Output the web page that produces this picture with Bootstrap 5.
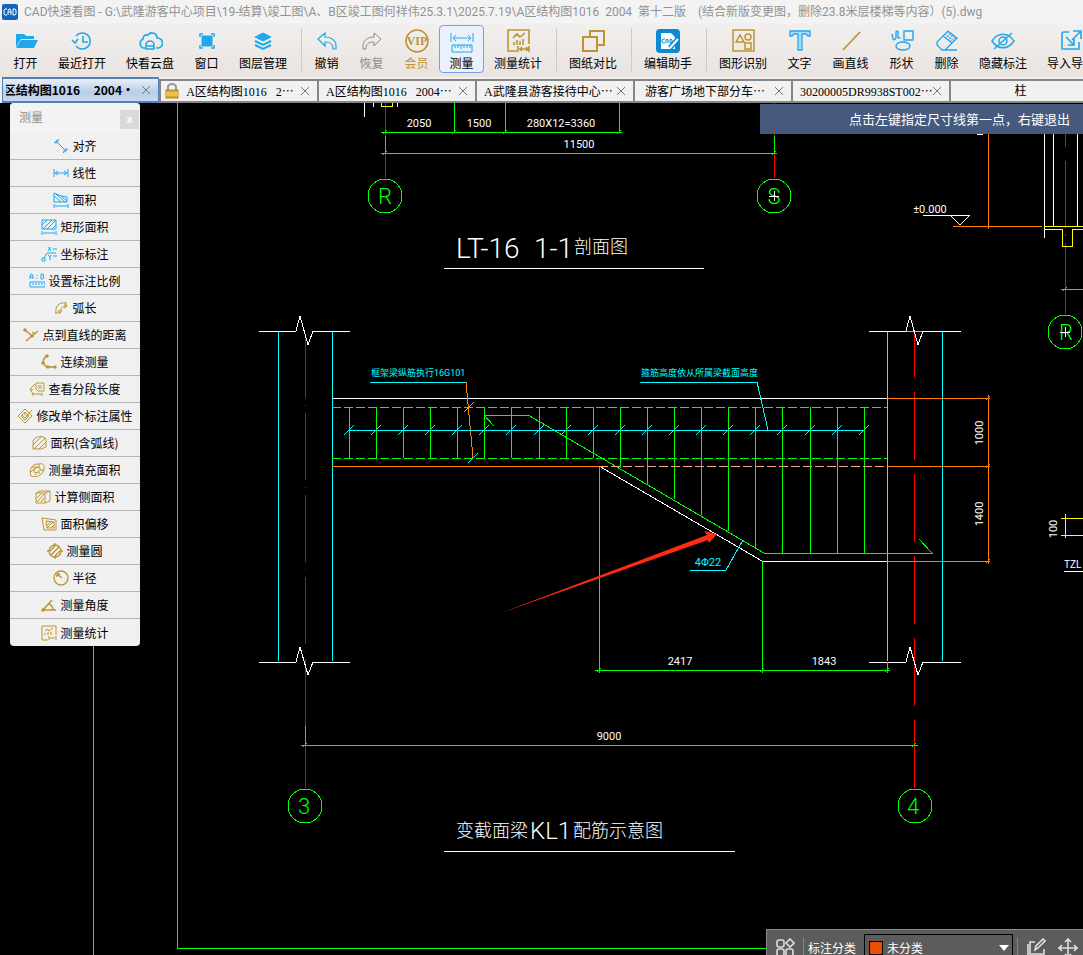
<!DOCTYPE html>
<html lang="zh-CN">
<head>
<meta charset="utf-8">
<meta name="viewport" content="width=device-width, initial-scale=1">
<title>CAD快速看图</title>
<link href="https://cdn.jsdelivr.net/npm/bootstrap@5.3.0/dist/css/bootstrap.min.css" rel="stylesheet">
<style>
  :root { --gold: #bd9434; --sky: #1fa8ec; }
  body { font: 12px/16px "Noto Sans CJK SC", sans-serif; color: #000; background: #000; }
  .app-title { height: 23px; background: #f3f3f3; color: #929292; font-family: Roboto, "Noto Sans CJK SC", sans-serif; white-space: pre; padding-left: 2px; gap: 6px; }
  .ribbon { background: linear-gradient(#f1f0ee, #eae3e0); padding: 2px 0 4px 3px; }
  .tool { flex: none; width: 45px; height: 48px; padding: 2px 0 0; border: 1px solid transparent; border-radius: 4px; background: none; color: #000; white-space: nowrap; display: flex; flex-direction: column; align-items: center; gap: 1px; }
  .tool.w3 { width: 57px; }
  .tool.w4 { width: 68px; }
  .tool.picked { background: #e9f1fd; border-color: #6fa0ee; }
  .tool svg { width: 26px; height: 26px; flex: none; }
  .tool:disabled { color: #8a8a8a; }
  .rule { flex: none; width: 1px; margin: 3px 2px 1px 4px; background: #cfcac8; }
  svg { fill: none; stroke: currentColor; }
  .sky { color: var(--sky); }
  .gold { color: var(--gold); }
  .doc-tabs { height: 26px; background: #f0f0f0; padding-left: 2px; }
  .doc { flex: none; width: 158px; height: 24px; border: 0 solid #868686; border-width: 2px 0 2px 2px; background: #f1f1f1; color: #000; padding: 0 8px 0 7px; font-family: "Liberation Serif", "Noto Sans CJK SC", sans-serif; white-space: pre; text-decoration: none; }
  .doc i { font-style: normal; font-family: "Noto Sans CJK SC", sans-serif; }
  .doc svg { width: 8px; height: 8px; flex: none; color: #777; }
  .doc.current { width: 157px; height: 26px; border: 1px solid #5580b5; border-width: 2px 1px; background: linear-gradient(#e8effa, #b9cde8 60%, #c8d9f0); font: 700 12px/16px "Noto Sans CJK SC", sans-serif; padding-left: 3px; }
  .doc.last { width: 142px; }
  .doc .lock { width: 14px; height: 16px; }
  .sheet { min-height: 0; }
  .sheet > svg { shape-rendering: crispEdges; }
  .sheet text { stroke: none; font-family: Roboto, "Noto Sans CJK SC", sans-serif; font-size: 11px; text-anchor: middle; }
  .sheet .headline { font-weight: 300; font-size: 28px; text-anchor: start; fill: #fff; }
  .sheet .headline .han { font-size: 18px; }
  .sheet .headline .mid { font-size: 24px; }
  .sheet .note { font-size: 9px; text-anchor: start; fill: #0ff; }
  .sheet .axis { font-weight: 300; font-size: 22px; fill: #0f0; }
  .sheet .tag { font-size: 10px; text-anchor: start; fill: #fff; }
  .g { stroke: #0f0; } .c { stroke: #0ff; } .w { stroke: #fff; } .o { stroke: #ff8000; } .r { stroke: #f00; } .y { stroke: #ff0; }
  .tip { top: 1px; right: 0; width: 323px; height: 30px; padding-right: 13px; background: #475a7d; color: #fff; font-size: 13px; }
  .palette { top: 0; left: 10px; width: 130px; border-radius: 4px; background: #f0f0f0; }
  .palette header { height: 30px; padding: 0 1px 2px 9px; background: #f3f3f3; color: #8d8d8d; }
  .palette header button { width: 19px; height: 19px; border: 0; background: #d9d9d9; color: #fff; font: 700 11px/16px "Liberation Sans", sans-serif; padding: 0; margin-top: 4px; }
  .pick { height: 27px; border: 0; border-bottom: 1px solid #b4b4b4; background: none; padding: 0; color: #000; gap: 3px; white-space: nowrap; }
  .pick:last-child { border-bottom: 0; }
  .pick svg { width: 16px; height: 16px; flex: none; }
  .marks { right: 0; bottom: -10px; width: 317px; height: 36px; background: #5c5c5c; border: 1px solid #8a8a8a; border-width: 1px 0 0 1px; color: #fff; padding: 0 5px 0 8px; }
  .marks svg { width: 20px; height: 20px; flex: none; color: #ddd; }
  .marks .bar { width: 1px; height: 20px; background: #858585; }
  .marks select { width: 149px; height: 28px; appearance: none; border: 1px solid #000; border-radius: 0; background: #5c5c5c; color: #fff; padding: 0 0 0 22px; font-size: 12px; }
  .swatch { left: 5px; top: 7px; width: 14px; height: 14px; background: #e85000; border: 1px solid #000; }
  .marks .caret { right: 4px; top: 11px; width: 10px; height: 6px; color: #fff; pointer-events: none; }
</style>
<script src="https://cdn.jsdelivr.net/npm/bootstrap@5.3.0/dist/js/bootstrap.bundle.min.js"></script>
</head>
<body class="d-flex flex-column vh-100 overflow-hidden">

<header class="app-title d-flex align-items-center flex-shrink-0 overflow-hidden">
  <svg width="16" height="16" viewBox="0 0 16 16" class="flex-shrink-0"><rect width="16" height="16" rx="2" fill="#1464bd" stroke="none"/><path d="M5 5H3L2 6v4l1 1h2M6 11V7l1-2h1l1 2v4M6 8h3M11 5v6h2l1-1V6l-1-1z" stroke="#fff"/></svg>
  <span>CAD快速看图 - G:\武隆游客中心项目\19-结算\竣工图\A、B区竣工图何祥伟25.3.1\2025.7.19\A区结构图1016  2004  第十二版    (结合新版变更图，删除23.8米层楼梯等内容）(5).dwg</span>
</header>

<nav class="ribbon d-flex flex-shrink-0 overflow-hidden" aria-label="工具栏">
  <button class="tool"><svg class="sky" viewBox="0 0 26 26"><path d="M3 19V6h8l2 2h8v3H8z" fill="currentColor" stroke="none"/><path d="M8 12h17l-4 8H3z" fill="currentColor" stroke="none"/></svg>打开</button>
  <button class="tool w4"><svg class="sky" viewBox="0 0 26 26" stroke-width="1.6"><path d="M7 8a8 8 0 1 1 0 10M3 12l3 3 3-4M14 8v6h5"/></svg>最近打开</button>
  <button class="tool w4"><svg class="sky" viewBox="0 0 26 26" stroke-width="1.6"><path d="M8 20H6a5 5 0 0 1 0-9 4 4 0 0 1 5-4 5 5 0 0 1 9 3 5 5 0 0 1 1 10h-2M9 21v-4a4 4 0 0 1 8 0v4zM9 18h8"/></svg>快看云盘</button>
  <button class="tool"><svg class="sky" viewBox="0 0 26 26"><path d="M8 8h10v10H8z" fill="currentColor"/><path d="M6 9V6h3M17 6h3v3M20 17v3h-3M9 20H6v-3" stroke-width="1.5"/></svg>窗口</button>
  <button class="tool w4"><svg class="sky" viewBox="0 0 26 26"><path d="M13 5l8 4-8 4-8-4z" fill="currentColor"/><path d="M5 13l8 4 8-4M5 17l8 4 8-4" stroke-width="2"/></svg>图层管理</button>
  <span class="rule"></span>
  <button class="tool"><svg class="sky" viewBox="0 0 26 26" stroke-width="1.2"><path d="M4 11l7-6v4c7 0 11 4 11 9v3h-3c0-5-2-7-8-7v4z"/></svg>撤销</button>
  <button class="tool" disabled><svg viewBox="0 0 26 26" stroke-width="1"><path d="M22 11l-7-6v4C8 9 4 13 4 18v3h3c0-5 2-7 8-7v4z"/></svg>恢复</button>
  <button class="tool gold"><svg viewBox="0 0 26 26"><circle cx="13" cy="13" r="11" stroke-width="1.6"/><text x="13" y="17" text-anchor="middle" font-family="Liberation Serif, serif" font-weight="700" font-size="12" fill="currentColor" stroke="none">VIP</text></svg>会员</button>
  <button class="tool picked"><svg class="sky" viewBox="0 0 26 26"><path d="M2 5v9M24 5v9M4 10h18M7 7l-3 3 3 3M19 7l3 3-3 3M3 17h20v7H3zM6 17v3M9 17v3M12 17v4M15 17v3M18 17v3M21 17v3"/></svg>测量</button>
  <button class="tool w4"><svg class="gold" viewBox="0 0 26 26" stroke-width="1.6"><path d="M12 23H3V2h21v14M8 10l4-4 3 3 5-4M9 17v-3M12 17v-5M15 17v-4M18 17v-6M13 18v6M24 18v6M14 21h9M17 19l-2 2 2 2M21 19l2 2-2 2"/></svg>测量统计</button>
  <span class="rule"></span>
  <button class="tool w4"><svg class="gold" viewBox="0 0 26 26" stroke-width="2"><path d="M10 9V3h14v14h-7M3 9h14v14H3z"/></svg>图纸对比</button>
  <span class="rule"></span>
  <button class="tool w4"><svg viewBox="0 0 26 26"><rect x="1" y="1" width="24" height="24" rx="4" fill="#0b8ad4" stroke="none"/><path d="M6 5h10l4 4v12H6z" fill="#fff" stroke="none"/><path d="M10 11H8l-1 1v2l1 1h2M11 15v-3l1-1 1 1v3M15 11v4h1l1-1v-2l-1-1z" stroke="#0b8ad4"/><path d="M15 20l8-9" stroke="#0b8ad4" stroke-width="5"/><path d="M15 20l8-9" stroke="#fff" stroke-width="2"/></svg>编辑助手</button>
  <span class="rule"></span>
  <button class="tool w4"><svg class="gold" viewBox="0 0 26 26" stroke-width="1.5"><path d="M3 2h21v21H3zM6 14l4-7 4 7zM15 15h6v6h-6z"/><circle cx="18" cy="9" r="3"/></svg>图形识别</button>
  <button class="tool"><svg class="sky" viewBox="0 0 26 26" stroke-width="1.3"><path d="M3 3h20v5h-2l-2-2h-4v16h-4V6H7L5 8H3z" fill="#a5dcf8"/></svg>文字</button>
  <button class="tool w3"><svg class="gold" viewBox="0 0 26 26" stroke-width="1.8"><path d="M5 22L22 4"/></svg>画直线</button>
  <button class="tool"><svg class="sky" viewBox="0 0 26 26" stroke-width="1.4"><path d="M3 6l1 5c1 2 3 0 3-2V4c0-1 2-1 2 0v5c0 2 2 1 2 0M15 3h9v9h-9z"/><ellipse cx="14" cy="18" rx="7" ry="4"/></svg>形状</button>
  <button class="tool"><svg class="sky" viewBox="0 0 26 26" stroke-width="1.3"><path d="M3 14L14 3l9 7-12 12H8l-5-5zM9 8l9 7M11 22h12"/><path stroke-width=".7" d="M11 6l9 7M13 4l9 7M12 10l5-5M14 12l5-5M16 14l5-5"/></svg>删除</button>
  <button class="tool w4"><svg class="sky" viewBox="0 0 26 26" stroke-width="1.5"><path d="M2 13c6-9 16-9 22 0-6 9-16 9-22 0zM4 21L22 5"/><circle cx="13" cy="13" r="4"/></svg>隐藏标注</button>
  <button class="tool w4"><svg class="sky" viewBox="0 0 26 26" stroke-width="1.6"><path d="M11 4H6a2 2 0 0 0-2 2v15h17v-7M15 3h8v8M22 4l-8 8M8 9l8 8M16 11v6h-6"/></svg>导入导出</button>
</nav>

<nav class="doc-tabs d-flex align-items-end flex-shrink-0 overflow-hidden" aria-label="图纸">
  <a href="#" class="doc current d-flex align-items-center gap-2"><span class="flex-fill d-flex justify-content-end overflow-hidden">A区结构图1016     2004·</span><svg viewBox="0 0 8 8"><path d="M0 0l8 8M8 0L0 8"/></svg></a>
  <a href="#" class="doc d-flex align-items-center justify-content-between ps-1"><svg class="lock" viewBox="0 0 14 16"><path d="M3 8V4a4 3 0 0 1 8 0v4" stroke="#999" stroke-width="2"/><rect x="1" y="7" width="12" height="8" fill="#e0a92c" stroke="#b98518"/><path d="M1 10h12M1 12h12" stroke="#f6d77a"/></svg><span>A区结构图1016   2<i>…</i></span><svg viewBox="0 0 8 8"><path d="M0 0l8 8M8 0L0 8"/></svg></a>
  <a href="#" class="doc d-flex align-items-center justify-content-between"><span>A区结构图1016   2004<i>…</i></span><svg viewBox="0 0 8 8"><path d="M0 0l8 8M8 0L0 8"/></svg></a>
  <a href="#" class="doc d-flex align-items-center justify-content-between"><span>A武隆县游客接待中心<i>…</i></span><svg viewBox="0 0 8 8"><path d="M0 0l8 8M8 0L0 8"/></svg></a>
  <a href="#" class="doc d-flex align-items-center justify-content-between"><span> 游客广场地下部分车<i>…</i></span><svg viewBox="0 0 8 8"><path d="M0 0l8 8M8 0L0 8"/></svg></a>
  <a href="#" class="doc d-flex align-items-center justify-content-between"><span>30200005DR9938ST002<i>…</i></span><svg viewBox="0 0 8 8"><path d="M0 0l8 8M8 0L0 8"/></svg></a>
  <a href="#" class="doc last d-flex align-items-center justify-content-center"><span>柱</span></a>
</nav>

<main class="sheet position-relative flex-fill overflow-hidden">
  <svg class="w-100 h-100 d-block" viewBox="1 104 1083 852" preserveAspectRatio="xMinYMin slice" role="img" aria-label="图纸">
    <!-- sheet frame -->
    <path class="g" d="M178 103V949H1084M94 640V956"/>
    <!-- section 1-1 -->
    <path class="w" d="M365 103V118M374 103V108M398 103V108"/>
    <path class="r" d="M386 103V179M775 103V179"/>
    <path class="g" d="M382 133H623M455 103V134M506 103V134M620 103V134M382 154H778M386 137V153M775 137V153M384 135l4-4M453 135l4-4M504 135l4-4M618 135l4-4M384 156l4-4M773 156l4-4"/>
    <path class="y" d="M382 103V107H393V103"/>
    <g class="g"><circle cx="386" cy="197" r="17"/><circle cx="775" cy="197" r="17"/><circle cx="1066" cy="333" r="17"/><circle cx="306" cy="807" r="17"/><circle cx="916" cy="807" r="17"/></g>
    <text class="axis" x="386" y="205">R</text><text class="axis" x="775" y="205">S</text><text class="axis" x="1067" y="341">R</text>
    <text class="axis" x="305" y="815">3</text><text class="axis" x="914" y="815">4</text>
    <path class="w" d="M770 197h10M775 192v10M1061 333h10M1066 328v10"/>
    <g fill="#fff"><text x="420" y="128">2050</text><text x="480" y="128">1500</text><text x="562" y="128">280X12=3360</text><text x="580" y="149">11500</text></g>
    <text class="headline"><tspan x="457" y="259">LT-16</tspan><tspan x="535" y="259">1-1</tspan><tspan class="han" x="575" y="254">剖面图</tspan></text>
    <path class="w" d="M445 269H705"/>
    <!-- detail at the right edge -->
    <path class="o" d="M989 135V230M954 227H1043"/>
    <path class="w" d="M924 216H971L961 226L951 216M978 135H984M1045 134V239M1054 134V227M1078 134V227"/>
    <path class="r" d="M1066 134V148M1066 162V229M1066 235V237M1066 244V315"/>
    <path class="y" d="M1045 227H1084M1045 230H1063V247H1073V230H1084M1062 519H1084M1062 536H1084M1066 515V539"/>
    <path class="g" d="M1062 290H1084M1064 292l4-4"/>
    <text x="931" y="214" fill="#fff">±0.000</text>
    <text class="tag" x="1065" y="569">TZL</text><path class="w" d="M1065 572H1084"/>
    <!-- columns -->
    <path class="c" d="M279 332V662M333 332V662M888 332V662M943 332V662M906 332H923"/>
    <path stroke="#d00" d="M306 335V399M306 406V407M306 414V481M306 488V489M306 496V563M306 570V571M306 578V645M306 652V653M306 660V789"/>
    <path class="r" d="M915 332V378M915 393V461M915 475V543M915 557V625M915 639V707M915 721V789"/>
    <path class="w" d="M260 332H297L301 317L309 346L314 332H351M870 332H907L911 317L919 346L924 332H962M260 663H297L301 648L309 676L314 663H351M870 663H907L911 648L919 676L924 663H962"/>
    <!-- beam, stirrups and haunch bar -->
    <path class="w" d="M333 399H888M600 467L763 562H888"/>
    <path class="g" stroke-dasharray="9 3" d="M333 408H888M333 459H888"/>
    <path class="g" d="M350 408V459M377 408V459M404 408V459M431 408V459M458 408V459M485 408V459M512 408V459M540 408V459M567 408V459M594 408V459M621 408V469M648 408V485M675 408V500M702 408V516M729 408V532M756 408V548M783 408V554M811 408V554M838 408V554M865 408V554"/>
    <path class="g" d="M495 427L485 416H529L765 554H933L920 540"/>
    <path class="o" d="M333 467H600M467 383L474 459"/>
    <path stroke="#ffa080" stroke-dasharray="9 3" d="M600 467H888"/>
    <path class="c" d="M349 431H865M345 436l10-10M372 436l10-10M399 436l10-10M426 436l10-10M453 436l10-10M480 436l10-10M507 436l10-10M535 436l10-10M562 436l10-10M589 436l10-10M616 436l10-10M643 436l10-10M670 436l10-10M697 436l10-10M724 436l10-10M751 436l10-10M778 436l10-10M806 436l10-10M833 436l10-10M860 436l10-10M465 413l10-10M469 464l10-10M371 383H467M641 383H758L769 431M691 571H727L744 541"/>
    <text class="note" x="372" y="377">框架梁纵筋执行16G101</text>
    <text class="note" x="642" y="377">箍筋高度依从所属梁截面高度</text>
    <text x="709" y="567" fill="#0ff">4Φ22</text>
    <!-- dimensions -->
    <path class="o" d="M889 399H991M889 467H991M889 562H991M989 396V565M987 401l4-4M987 469l4-4M987 564l4-4"/>
    <path class="g" d="M600 468V674M763 563V674M888 663V674M596 671H891M598 673l4-4M761 673l4-4M886 673l4-4M302 746H919M306 727V745M304 748l4-4M913 748l4-4"/>
    <g fill="#fff"><text x="681" y="666">2417</text><text x="825" y="666">1843</text><text x="610" y="741">9000</text>
      <text transform="translate(984 434) rotate(-90)">1000</text><text transform="translate(984 515) rotate(-90)">1400</text><text transform="translate(1058 530) rotate(-90)">100</text></g>
    <path fill="#ff2a14" stroke="none" shape-rendering="auto" d="M499 615L708 536L705 532L718 535L710 544L709 541Z"/>
    <text class="headline"><tspan class="han" x="457" y="838">变截面梁</tspan><tspan class="mid" x="531" y="840">KL1</tspan><tspan class="han" x="574" y="838">配筋示意图</tspan></text>
    <path class="w" d="M445 852H736"/>
  </svg>

  <div class="tip position-absolute d-flex align-items-center justify-content-end" role="status">点击左键指定尺寸线第一点，右键退出</div>

  <section class="palette position-absolute d-flex flex-column overflow-hidden" aria-label="测量">
    <header class="d-flex justify-content-between align-items-center"><span>测量</span><button aria-label="关闭">x</button></header>
    <button class="pick d-flex align-items-center justify-content-center"><svg class="sky" viewBox="0 0 16 16"><path d="M1 5l5-4M10 15l5-4M3 3l10 10M3 6V3h3M13 10v3h-3"/></svg>对齐</button>
    <button class="pick d-flex align-items-center justify-content-center"><svg class="sky" viewBox="0 0 16 16"><path d="M1 4v8M15 4v8M2 8h12M5 6L2 8l3 2M11 6l3 2-3 2"/></svg>线性</button>
    <button class="pick d-flex align-items-center justify-content-center"><svg class="sky" viewBox="0 0 16 16"><path d="M1 1l7 3 6 1v5H1zM1 4l7 6M3 2l9 8M8 4l6 5M1 12v4M15 12v4M2 14h12"/></svg>面积</button>
    <button class="pick d-flex align-items-center justify-content-center"><svg class="sky" viewBox="0 0 16 16"><path d="M1 1h14v9H1zM1 6l5-5M2 10l9-9M6 10l9-9M11 10l4-4M1 12v4M15 12v4M2 14h12"/></svg>矩形面积</button>
    <button class="pick d-flex align-items-center justify-content-center"><svg class="sky" viewBox="0 0 16 16"><path d="M1 12h3v3H1zM3 12l3-5h9M7 1l3 4M10 1L7 5M12 3h4M7 9l2 2 1-2M9 11v3M12 10h4"/></svg>坐标标注</button>
    <button class="pick d-flex align-items-center justify-content-center"><svg class="sky" viewBox="0 0 16 16"><path d="M1 6V3l1-2h1l1 2v3M1 4h3M8 2v1M8 5v1M12 1v5h2l1-1-1-2 1-1-1-1zM1 9h15v5H1zM4 10v2M7 10v2M10 10v2M13 10v2"/></svg>设置标注比例</button>
    <button class="pick d-flex align-items-center justify-content-center"><svg class="gold" viewBox="0 0 16 16"><path d="M3 13C2 6 6 2 13 3M7 13c0-4 2-7 7-7M2 13h5M13 2v4M5 10l2 3 2-3M11 4l3 2-3 2"/></svg>弧长</button>
    <button class="pick d-flex align-items-center justify-content-center"><svg class="gold" viewBox="0 0 16 16" stroke-width="1.5"><path d="M2 3l7 6M3 14L15 4M9 5l3 2"/><circle cx="2" cy="3" r="1"/><circle cx="9" cy="9" r="1"/></svg>点到直线的距离</button>
    <button class="pick d-flex align-items-center justify-content-center"><svg class="gold" viewBox="0 0 16 16" stroke-width="1.5"><path d="M6 2C1 5 1 10 6 13h8"/><g fill="currentColor"><circle cx="6" cy="2" r="1"/><circle cx="2" cy="9" r="1"/><circle cx="7" cy="13" r="1"/><circle cx="14" cy="13" r="1"/></g></svg>连续测量</button>
    <button class="pick d-flex align-items-center justify-content-center"><svg class="gold" viewBox="0 0 16 16"><path d="M7 2h8v8H9L7 8zM9 5h4M9 7h4M6 3L1 8l3 5h9M3 6l-2 2 3 1M4 12v3M13 12v3"/></svg>查看分段长度</button>
    <button class="pick d-flex align-items-center justify-content-center"><svg class="gold" viewBox="0 0 16 16"><path d="M1 8l7-7 7 7-7 7zM4 8l4-4 4 4-4 4zM5 7l3 3 7-8M7 5l3 4"/></svg>修改单个标注属性</button>
    <button class="pick d-flex align-items-center justify-content-center"><svg class="gold" viewBox="0 0 16 16"><path d="M2 14V6c2-5 10-6 13-2v8l-5 2zM2 10l8-8M3 14L14 3M8 14l7-7"/></svg>面积(含弧线)</button>
    <button class="pick d-flex align-items-center justify-content-center"><svg class="gold" viewBox="0 0 16 16"><path d="M2 14C0 9 2 2 9 2c5-1 7 1 6 5-1 6-7 9-13 7zM5 10c0-4 5-6 6-4 1 3-3 6-6 4zM2 10l4-4M3 5l6 0M6 13l2-3M10 2v4M11 8l4 0M11 12L9 9"/></svg>测量填充面积</button>
    <button class="pick d-flex align-items-center justify-content-center"><svg class="gold" viewBox="0 0 16 16"><path d="M1 4h9v10H1zM1 4l4-2h10v10l-5 2M10 4l5-2M2 9l4-4M2 13l7-8M6 13l3-4"/></svg>计算侧面积</button>
    <button class="pick d-flex align-items-center justify-content-center"><svg class="gold" viewBox="0 0 16 16"><path d="M1 2l14 2v10H3zM5 5l8 1v6H6zM6 9l4-3M6 12l6-6M10 12l3-3"/></svg>面积偏移</button>
    <button class="pick d-flex align-items-center justify-content-center"><svg class="gold" viewBox="0 0 16 16" stroke-width="1.3"><circle cx="8" cy="8" r="6"/><path d="M3 8l5-5M4 12l8-8M8 13l5-5M0 8h3M13 8h3M8 0v3M8 13v3"/></svg>测量圆</button>
    <button class="pick d-flex align-items-center justify-content-center"><svg class="gold" viewBox="0 0 16 16" stroke-width="1.3"><circle cx="8" cy="8" r="7"/><path d="M9 8L4 4M4 7V4h3"/></svg>半径</button>
    <button class="pick d-flex align-items-center justify-content-center"><svg class="gold" viewBox="0 0 16 16" stroke-width="1.5"><path d="M15 13H2l9-10M7 7c3 0 5 3 5 6"/><circle cx="2" cy="13" r="1"/></svg>测量角度</button>
    <button class="pick d-flex align-items-center justify-content-center"><svg class="gold" viewBox="0 0 16 16"><path d="M7 15H1V1h14v9M4 6l2-2 2 2 4-3M4 10V8M7 10V7M10 10V7M8 11v4M15 11v4M9 13h5"/></svg>测量统计</button>
  </section>

  <div class="marks position-absolute d-flex align-items-center">
    <svg viewBox="0 0 20 20" stroke-width="1.6"><rect x="2" y="2" width="7" height="7" rx="2"/><path d="M15 1l4 4-4 4-4-4z"/><rect x="2" y="11" width="7" height="7" rx="2"/><rect x="11" y="11" width="7" height="7" rx="2"/></svg>
    <span class="bar ms-2"></span>
    <label for="kind" class="ms-1">标注分类</label>
    <span class="position-relative ms-2"><select id="kind" class="d-block"><option>未分类</option></select><span class="swatch position-absolute"></span><svg class="caret position-absolute" viewBox="0 0 10 6"><path d="M0 0h10L5 6z" fill="#fff" stroke="none"/></svg></span>
    <span class="bar ms-1"></span>
    <svg class="ms-2" viewBox="0 0 20 20" stroke-width="1.6"><path d="M9 4H4v12h14v-5M2 6v12h14M9 12l1-4 7-7 2 2-7 7z"/></svg>
    <svg class="ms-auto" viewBox="0 0 20 20" stroke-width="1.6"><path d="M10 2v16M2 10h16M7 4l3-3 3 3M7 16l3 3 3-3M4 7l-3 3 3 3M16 7l3 3-3 3"/></svg>
  </div>
</main>
</body>
</html>
